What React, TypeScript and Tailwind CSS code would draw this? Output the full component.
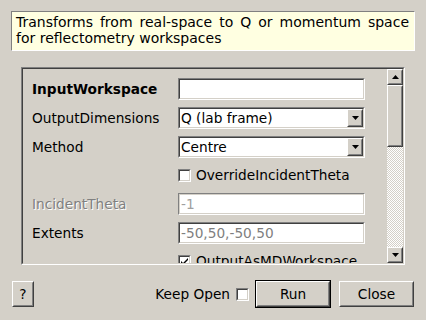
import React from "react";

const Raised = ({
  className = "",
  children,
}: {
  className?: string;
  children?: React.ReactNode;
}) => (
  <div
    className={`border border-t-white border-l-white border-b-[#404040] border-r-[#404040] ${className}`}
  >
    <div className="w-full h-full flex items-center justify-center border border-t-[#d4d0c8] border-l-[#d4d0c8] border-b-[#808080] border-r-[#808080] bg-[#d4d0c8]">
      {children}
    </div>
  </div>
);

const Sunken = ({
  className = "",
  children,
  disabled = false,
}: {
  className?: string;
  children?: React.ReactNode;
  disabled?: boolean;
}) => (
  <div
    className={`border border-t-[#808080] border-l-[#808080] border-b-white border-r-white ${className}`}
  >
    <div
      className={`w-full h-full flex items-center border bg-white ${
        disabled
          ? "border-t-[#d4d0c8] border-l-[#d4d0c8] border-b-[#d4d0c8] border-r-[#d4d0c8]"
          : "border-t-[#404040] border-l-[#404040] border-b-[#d4d0c8] border-r-[#d4d0c8]"
      }`}
    >
      {children}
    </div>
  </div>
);

const DownArrow = () => (
  <svg width="7" height="4" viewBox="0 0 7 4">
    <polygon points="0,0 7,0 3.5,4" fill="#000" />
  </svg>
);

const UpArrow = () => (
  <svg width="7" height="4" viewBox="0 0 7 4">
    <polygon points="0,4 7,4 3.5,0" fill="#000" />
  </svg>
);

const CheckBox = ({ checked = false }: { checked?: boolean }) => (
  <Sunken className="w-[13px] h-[13px] shrink-0">
    {checked && (
      <svg width="9" height="9" viewBox="0 0 9 9" className="mx-auto">
        <path d="M1 4l2 2 5-5v2l-5 5-2-2z" fill="#000" />
      </svg>
    )}
  </Sunken>
);

const Combo = ({ value }: { value: string }) => (
  <Sunken className="w-[187px] h-[22px]">
    <span className="flex-1 pl-[1px] truncate">{value}</span>
    <Raised className="w-[16px] h-[18px]">
      <DownArrow />
    </Raised>
  </Sunken>
);

export default function App() {
  return (
    <div className="w-[426px] h-[320px] bg-[#d4d0c8] text-black text-[13.7px] font-['DejaVu_Sans',sans-serif] pt-[11px] overflow-hidden">
      {/* algorithm summary */}
      <div className="mx-[11px] h-[40px] border border-t-[#808080] border-l-[#808080] border-b-white border-r-white bg-[#ffffe1] pl-[4px] pr-[5px] pt-[2px] text-[14px] leading-[16px] text-justify">
        Transforms from real-space to Q or momentum space for reflectometry workspaces
      </div>

      {/* property list */}
      <div className="ml-[21px] mt-[16px] w-[384px] h-[198px] border border-t-[#808080] border-l-[#808080] border-b-white border-r-white">
        <div className="w-full h-full flex border border-t-[#404040] border-l-[#404040] border-b-[#d4d0c8] border-r-[#d4d0c8]">
          <div className="flex-1 overflow-hidden pt-[9px] pl-[9px] flex flex-col gap-[7px]">
            <div className="flex items-center h-[22px] shrink-0">
              <span className="w-[146px] font-bold">InputWorkspace</span>
              <Sunken className="w-[187px] h-[22px]" />
            </div>
            <div className="flex items-center h-[22px] shrink-0">
              <span className="w-[146px]">OutputDimensions</span>
              <Combo value="Q (lab frame)" />
            </div>
            <div className="flex items-center h-[22px] shrink-0">
              <span className="w-[146px]">Method</span>
              <Combo value="Centre" />
            </div>
            <div className="flex items-center h-[21px] shrink-0 pl-[146px] gap-[5px]">
              <CheckBox />
              <span>OverrideIncidentTheta</span>
            </div>
            <div className="flex items-center h-[22px] shrink-0">
              <span className="w-[146px] text-[#808080] [text-shadow:1px_1px_0_#fff]">
                IncidentTheta
              </span>
              <Sunken className="w-[187px] h-[22px]" disabled>
                <span className="pl-[1px] text-[#a0a0a0]">-1</span>
              </Sunken>
            </div>
            <div className="flex items-center h-[22px] shrink-0">
              <span className="w-[146px]">Extents</span>
              <Sunken className="w-[187px] h-[22px]">
                <span className="pl-[1px] text-[#808080]">-50,50,-50,50</span>
              </Sunken>
            </div>
            <div className="flex items-center h-[21px] shrink-0 pl-[146px] gap-[5px]">
              <CheckBox checked />
              <span>OutputAsMDWorkspace</span>
            </div>
          </div>
          <div className="w-[16px] flex flex-col">
            <Raised className="w-[16px] h-[16px]">
              <UpArrow />
            </Raised>
            <Raised className="w-[16px] h-[62px]" />
            <div className="flex-1 bg-[repeating-conic-gradient(#ffffff_0_25%,#d4d0c8_0_50%)] bg-[length:2px_2px]" />
            <Raised className="w-[16px] h-[16px]">
              <DownArrow />
            </Raised>
          </div>
        </div>
      </div>

      {/* dialog buttons */}
      <div className="mt-[15px] h-[28px] flex items-center pl-[12px] pr-[12px]">
        <Raised className="w-[22px] h-[26px]">
          <span>?</span>
        </Raised>
        <div className="flex-1" />
        <span className="mr-[6px]">Keep Open</span>
        <CheckBox />
        <div className="ml-[6px] w-[76px] h-[28px] border border-black">
          <Raised className="w-full h-full">
            <span>Run</span>
          </Raised>
        </div>
        <Raised className="ml-[8px] w-[75px] h-[26px]">
          <span>Close</span>
        </Raised>
      </div>
    </div>
  );
}
